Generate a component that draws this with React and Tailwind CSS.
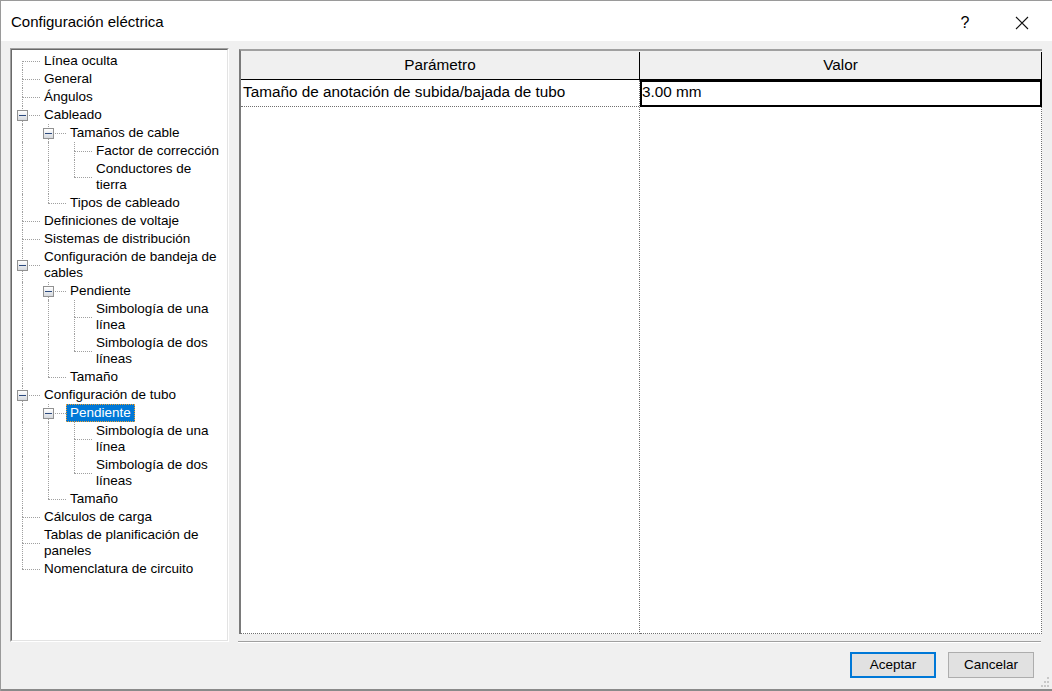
import React from 'react';

const symbology = [
  { t: ['Simbología de una', 'línea'] },
  { t: ['Simbología de dos', 'líneas'] },
];

const tree = [
  { t: ['Línea oculta'] },
  { t: ['General'] },
  { t: ['Ángulos'] },
  {
    t: ['Cableado'],
    c: [
      { t: ['Tamaños de cable'], c: [{ t: ['Factor de corrección'] }, { t: ['Conductores de', 'tierra'] }] },
      { t: ['Tipos de cableado'] },
    ],
  },
  { t: ['Definiciones de voltaje'] },
  { t: ['Sistemas de distribución'] },
  {
    t: ['Configuración de bandeja de', 'cables'],
    c: [{ t: ['Pendiente'], c: symbology }, { t: ['Tamaño'] }],
  },
  {
    t: ['Configuración de tubo'],
    c: [{ t: ['Pendiente'], sel: true, c: symbology }, { t: ['Tamaño'] }],
  },
  { t: ['Cálculos de carga'] },
  { t: ['Tablas de planificación de', 'paneles'] },
  { t: ['Nomenclatura de circuito'] },
];

function flatten(nodes, level, ancestors, out) {
  nodes.forEach((n, i) => {
    const hasNext = i < nodes.length - 1;
    out.push({ ...n, level, ancestors, hasNext, top: !(level === 0 && i === 0) });
    if (n.c) flatten(n.c, level + 1, ancestors.concat(hasNext), out);
  });
  return out;
}

const rows = flatten(tree, 0, [], []);

function TreeRow({ row }) {
  return (
    <div className="flex items-stretch">
      {row.ancestors.map((cont, d) => (
        <div key={d} className="relative w-[26px] shrink-0">
          {cont && <span className="absolute left-[10px] top-0 bottom-0 border-l border-dotted border-[#a0a0a0]" />}
        </div>
      ))}
      <div className="relative w-[28px] shrink-0">
        {row.top && <span className="absolute left-[10px] top-0 h-1/2 border-l border-dotted border-[#a0a0a0]" />}
        {row.hasNext && <span className="absolute left-[10px] top-1/2 bottom-0 border-l border-dotted border-[#a0a0a0]" />}
        <span className="absolute left-[10px] right-0 top-1/2 border-t border-dotted border-[#a0a0a0]" />
        {row.c && (
          <span className="absolute left-[5px] top-1/2 -mt-[5px] w-[11px] h-[11px] border border-[#919191] bg-gradient-to-b from-white to-[#d6d9de] flex items-center justify-center">
            <span className="w-[7px] h-px bg-[#2c4a7e]" />
          </span>
        )}
      </div>
      <div
        className={
          row.sel
            ? 'px-[3px] leading-[16px] border border-dotted border-[#f0a030] bg-[#0078d7] text-white whitespace-nowrap'
            : 'px-[3px] leading-[16px] border border-transparent text-black whitespace-nowrap'
        }
      >
        {row.t.map((l) => (
          <div key={l}>{l}</div>
        ))}
      </div>
    </div>
  );
}

export default function App() {
  return (
    <div className="w-[1052px] h-[691px] flex flex-col bg-[#f0f0f0] border-t border-l border-[#9a9a9a] font-['Liberation_Sans',Arial,sans-serif] text-black relative overflow-hidden">
      {/* title bar */}
      <div className="h-[40px] bg-white flex items-center pl-[10px] pr-[22px] pt-[3px] shrink-0">
        <span className="text-[15px]">Configuración eléctrica</span>
        <span className="ml-auto text-[16px] w-[12px] text-center mr-[44px]">?</span>
        <svg width="14" height="14" viewBox="0 0 14 14" className="mr-[1px]">
          <path d="M1 1 L13 13 M13 1 L1 13" stroke="#111" strokeWidth="1.1" fill="none" />
        </svg>
      </div>

      {/* body */}
      <div className="flex gap-[10px] pl-[9px] pt-[7px] shrink-0">
        {/* tree */}
        <div className="w-[219px] h-[594px] border border-t-[#a0a0a0] border-l-[#a0a0a0] border-r-white border-b-white">
          <div className="h-full bg-white border border-t-[#696969] border-l-[#696969] border-r-[#e3e3e3] border-b-[#e3e3e3] pt-[2px] text-[13.5px]">
            {rows.map((r, i) => (
              <TreeRow key={i} row={r} />
            ))}
          </div>
        </div>

        {/* grid */}
        <div className="flex flex-col mt-px">
          <div className="w-[803px] bg-[#f0f0f0] border-t-2 border-l-2 border-t-[#a0a0a0] border-l-[#7a7a7a] text-[15.3px]">
            <div className="flex h-[29px] border-b border-black bg-[#f0f0f0] pt-px">
              <div className="w-[399px] border-r border-black flex items-center justify-center">Parámetro</div>
              <div className="w-[402px] border-r border-black flex items-center justify-center">Valor</div>
            </div>
            <div className="flex h-[554px]">
              <div className="w-[399px] bg-white border-r border-b border-dotted border-[#707070]">
                <div className="h-[27px] border-b border-dotted border-[#707070] flex items-center pl-[2px] pb-[2px] whitespace-nowrap">
                  Tamaño de anotación de subida/bajada de tubo
                </div>
              </div>
              <div className="w-[402px] bg-white border-r border-b border-dotted border-[#707070]">
                <div className="h-[27px] w-[402px] border-2 border-black flex items-center pb-[2px]">3.00 mm</div>
              </div>
            </div>
          </div>
          <div className="mt-[7px] w-[803px] -ml-px border-t border-b border-t-[#a0a0a0] border-b-white" />
        </div>
      </div>

      {/* buttons */}
      <div className="flex justify-end gap-[12px] pr-[18px] mt-[9px] shrink-0 text-[13.5px]">
        <button className="w-[86px] h-[26px] bg-[#e1e1e1] border-2 border-[#0078d7] flex items-center justify-center">
          Aceptar
        </button>
        <button className="w-[86px] h-[26px] bg-[#e1e1e1] border border-[#adadad] flex items-center justify-center">
          Cancelar
        </button>
      </div>

      <div className="flex-1" />
      <div className="h-[2px] bg-[#8a8a8a] shrink-0" />

      {/* resize grip */}
      <svg width="10" height="12" viewBox="0 0 10 12" className="absolute right-[2px] bottom-[3px]">
        {[
          [7, 1],
          [4, 5],
          [7, 5],
          [1, 9],
          [4, 9],
          [7, 9],
        ].map(([x, y]) => (
          <rect key={`${x}-${y}`} x={x} y={y} width="2" height="2" fill="#c8c8c8" />
        ))}
      </svg>
    </div>
  );
}
